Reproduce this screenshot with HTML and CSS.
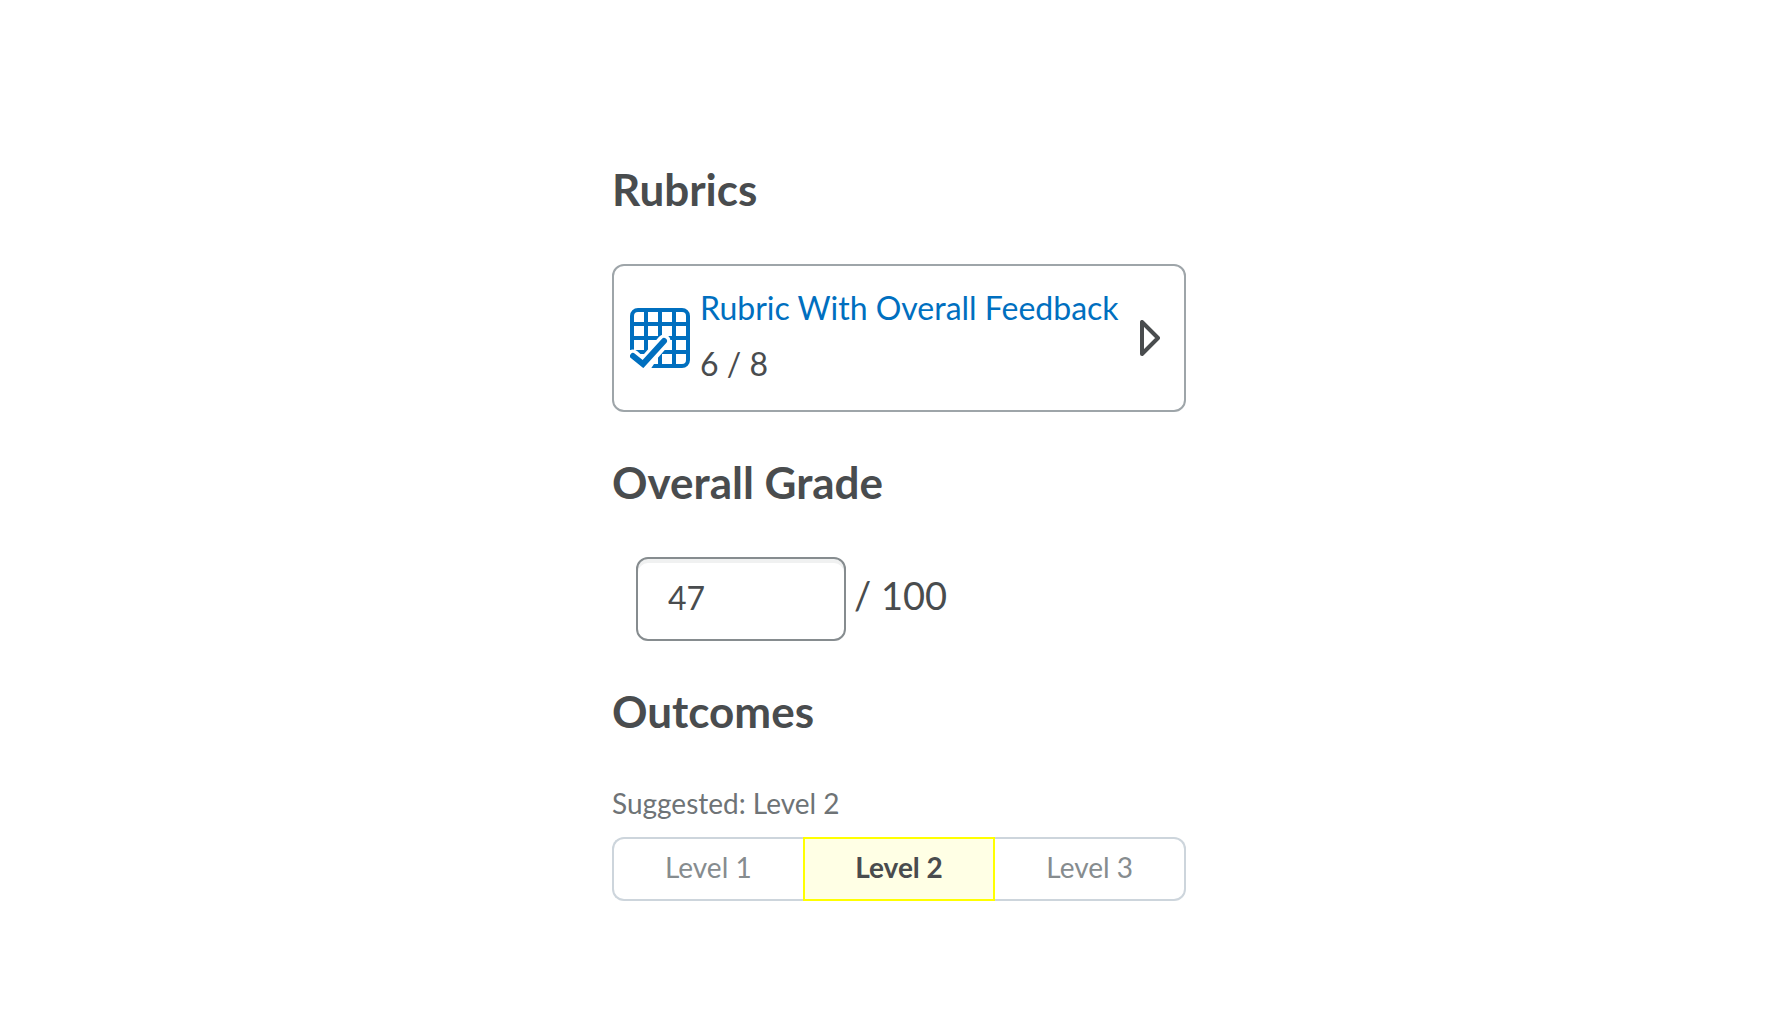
FILE: index.html
```html
<!DOCTYPE html>
<html lang="en">
<head>
<meta charset="utf-8">
<title>Evaluation</title>
<link rel="stylesheet" href="styles.css">
</head>
<body>
<main class="panel">
  <section class="block">
    <h2 class="heading">Rubrics</h2>
    <div class="rubric">
      <svg class="rubric-icon" viewBox="0 0 60 60" fill="none" aria-hidden="true">
        <rect x="2" y="2" width="56" height="56" rx="6" stroke="#006fbf" stroke-width="4"/>
        <path d="M16 2V58M30 2V58M44 2V58M2 16H58M2 30H58M2 44H58" stroke="#006fbf" stroke-width="4"/>
        <path d="M-2 42H4L12 50L24 56L20 62H-2Z" fill="#fff"/>
        <path d="M3 48L13 57L34 33" stroke="#fff" stroke-width="13" stroke-linecap="round" stroke-linejoin="round"/>
        <path d="M3 48L13 56L34 33" stroke="#006fbf" stroke-width="6" stroke-linecap="round"/>
      </svg>
      <div class="rubric-text">
        <a class="rubric-link" href="#">Rubric With Overall Feedback</a>
        <span>6 / 8</span>
      </div>
      <svg class="rubric-arrow" viewBox="0 0 20 36" fill="none" aria-hidden="true">
        <path d="M2 2V34L18 18Z" stroke="#494c4e" stroke-width="4" stroke-linejoin="round"/>
      </svg>
    </div>
  </section>
  <section class="block">
    <h2 class="heading" id="grade-heading">Overall Grade</h2>
    <div class="grade">
      <input class="grade-input" type="text" value="47" aria-labelledby="grade-heading">
      <span class="grade-total">/ 100</span>
    </div>
  </section>
  <section class="block">
    <h2 class="heading">Outcomes</h2>
    <p class="suggested">Suggested: Level 2</p>
    <div class="levels">
      <button class="level" type="button">Level 1</button>
      <button class="level level-selected" type="button" aria-pressed="true">Level 2</button>
      <button class="level" type="button">Level 3</button>
    </div>
  </section>
</main>
</body>
</html>
```
FILE: styles.css
```css
* {
  box-sizing: border-box;
}

body {
  margin: 0;
  padding: 165px 0 48px 30px;
  background: #fff;
  color: #494c4e;
  font-family: Lato, sans-serif;
  font-size: 32px;
  line-height: 40px;
}

.panel {
  display: flex;
  flex-direction: column;
  gap: 46px;
  max-width: 574px;
  margin: 0 auto;
}

.heading {
  margin: 0 0 51px;
  font-size: 44px;
  line-height: 48px;
  font-weight: 700;
}

.rubric {
  display: flex;
  align-items: center;
  gap: 10px;
  padding: 22px 24px 22px 16px;
  border: 2px solid #9ea5a9;
  border-radius: 12px;
}

.rubric-icon {
  flex: none;
  width: 60px;
  height: 60px;
}

.rubric-text {
  display: flex;
  flex: 1;
  flex-direction: column;
  gap: 16px;
  min-width: 0;
  padding-bottom: 4px;
}

.rubric-link {
  color: #006fbf;
  text-decoration: none;
}

.rubric-arrow {
  flex: none;
  width: 20px;
  height: 36px;
}

.grade {
  display: flex;
  align-items: center;
  gap: 8px;
  padding-left: 24px;
}

.grade-input {
  width: 210px;
  height: 84px;
  padding: 0 30px 4px;
  border: 2px solid #868c8f;
  border-radius: 12px;
  background: #fff;
  box-shadow: inset 0 4px 0 #f0f1f1;
  color: inherit;
  font: inherit;
}

.grade-total {
  padding-bottom: 8px;
  font-size: 38px;
}

.suggested {
  margin: 0 0 17px;
  color: #6e7376;
  font-size: 28px;
  line-height: 34px;
}

.levels {
  display: flex;
}

.level {
  flex: 1;
  height: 64px;
  padding: 0 0 4px;
  border: 2px solid #cdd5dc;
  background: #fff;
  color: #868c8f;
  font: inherit;
  font-size: 28px;
}

.level:first-child {
  border-right: 0;
  border-radius: 12px 0 0 12px;
}

.level:last-child {
  border-left: 0;
  border-radius: 0 12px 12px 0;
}

.level-selected {
  border-color: #ff0;
  background: #ffffe5;
  color: #494c4e;
  font-weight: 700;
}
```
